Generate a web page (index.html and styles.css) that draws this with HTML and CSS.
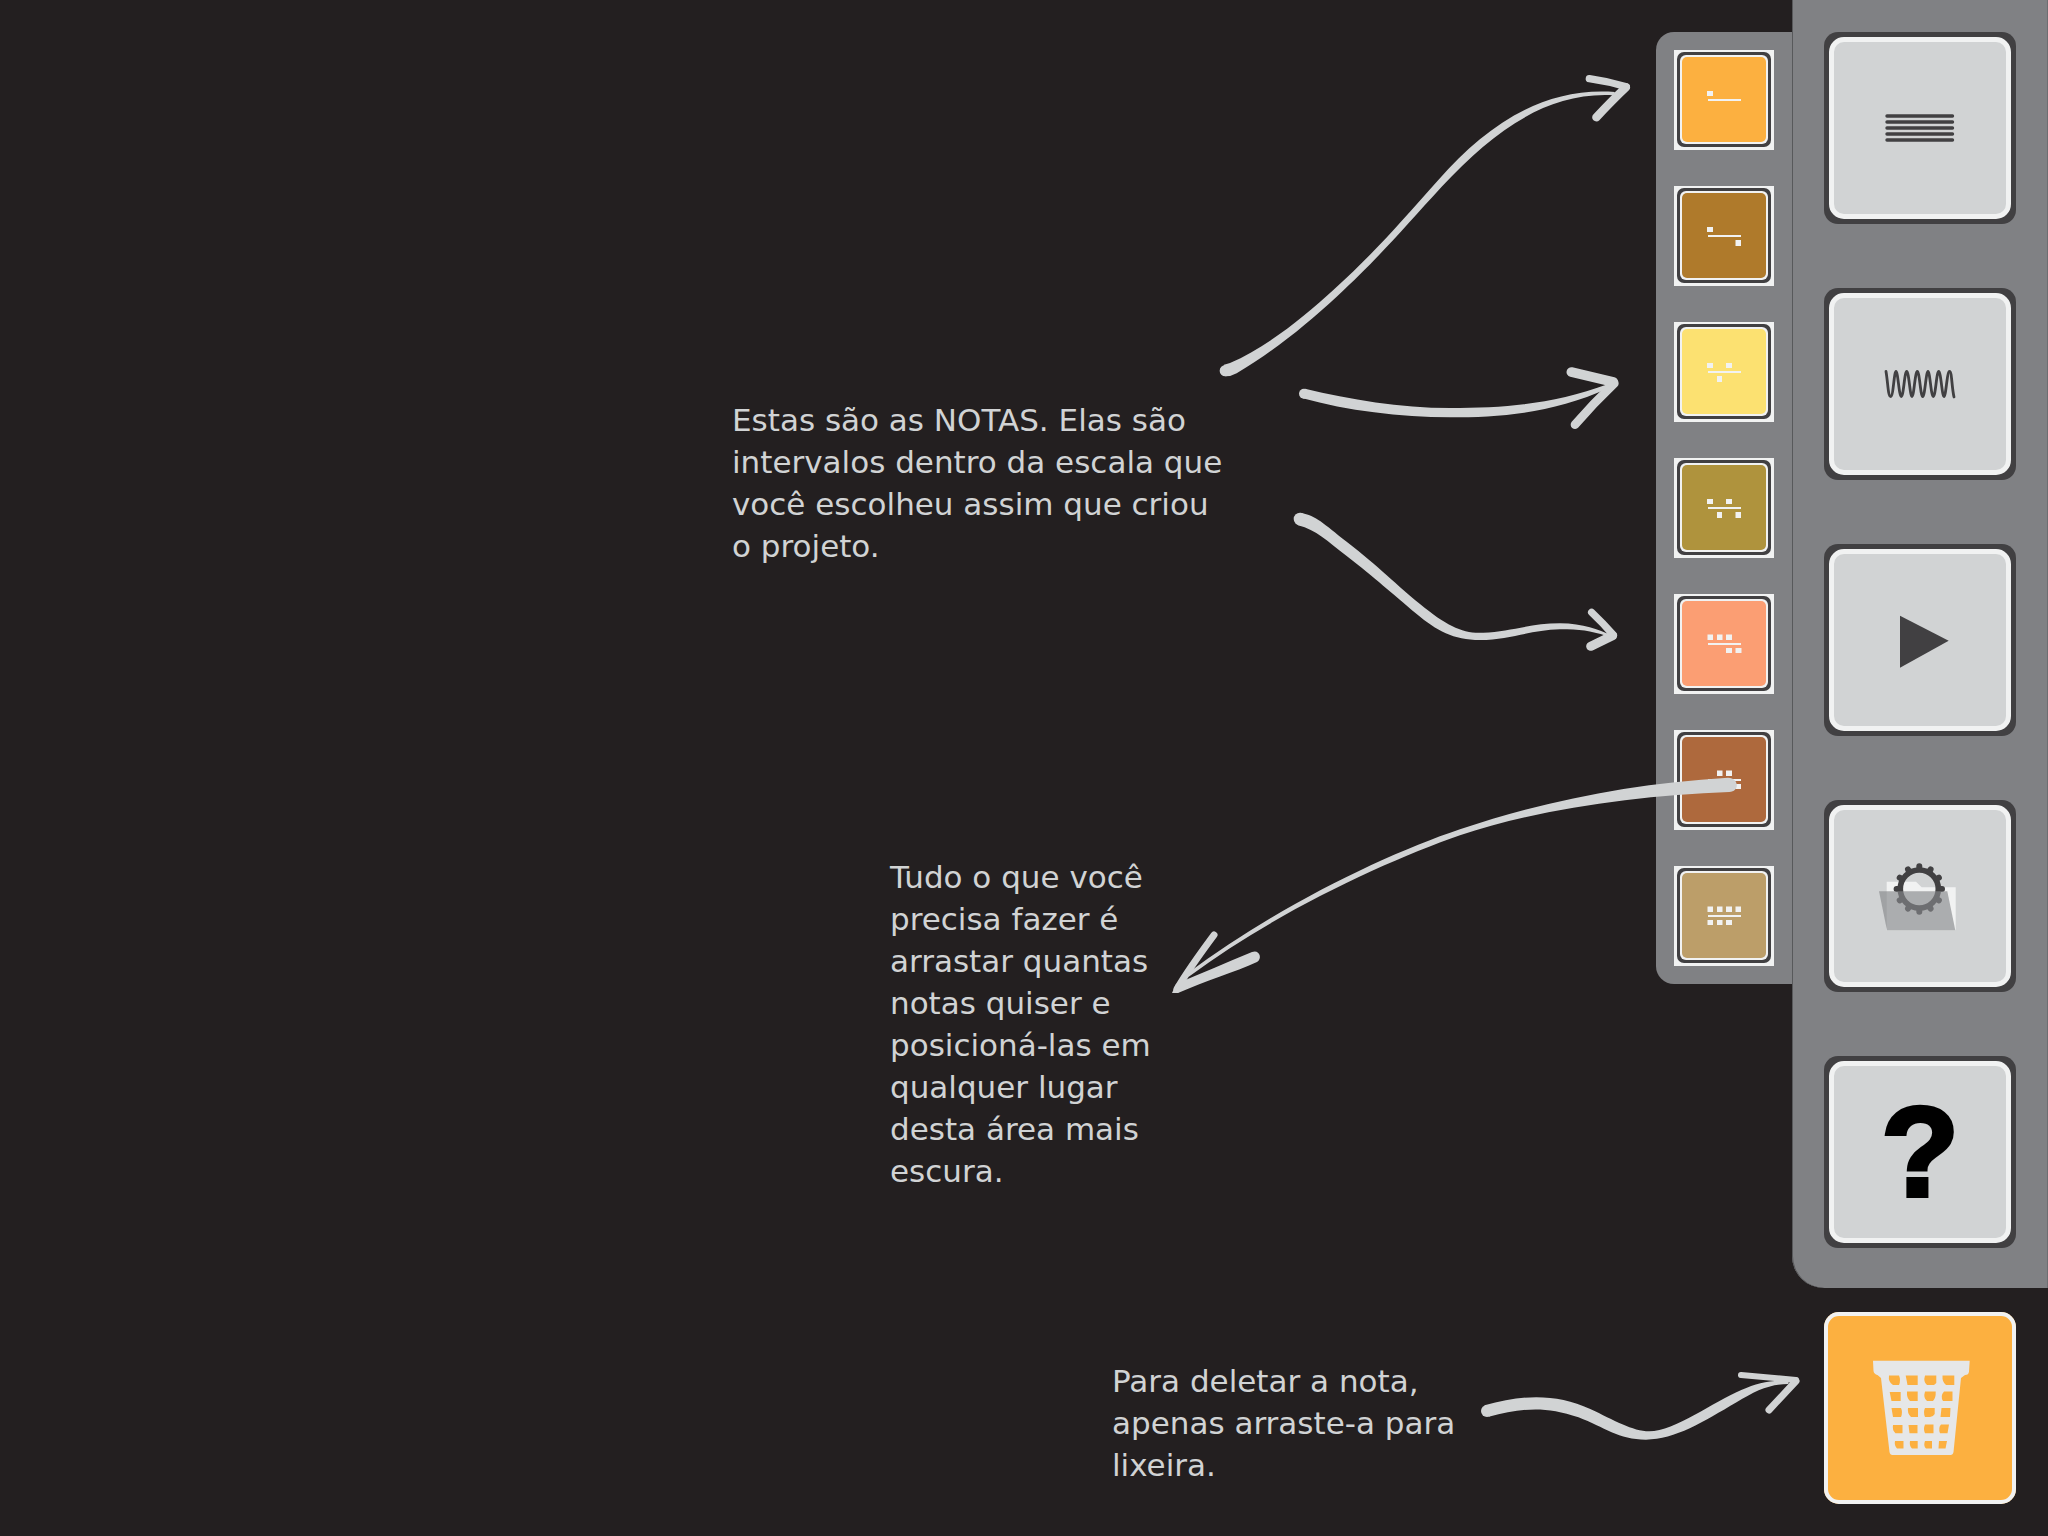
FILE: index.html
```html
<!DOCTYPE html>
<html lang="pt-BR">
<head>
<meta charset="utf-8">
<meta name="viewport" content="width=device-width, initial-scale=1">
<title>Notas</title>
<link rel="stylesheet" href="styles.css">
</head>
<body>
<svg class="defs" aria-hidden="true">
  <symbol id="note-frame" viewBox="0 0 100 100">
    <rect x="3" y="2" width="94" height="95" rx="7" fill="#414042"/>
    <rect x="6" y="5" width="88" height="89" rx="6" fill="#f1f2f2"/>
    <rect x="8" y="7" width="84" height="85" rx="5" fill="currentColor"/>
    <rect x="34" y="49" width="33" height="2" fill="#f1f2f2"/>
  </symbol>
</svg>
<div class="app">
  <main class="stage">
    <p class="callout callout-notes">Estas são as NOTAS. Elas são<br>intervalos dentro da escala que<br>você escolheu assim que criou<br>o projeto.</p>
    <p class="callout callout-drag">Tudo o que você<br>precisa fazer é<br>arrastar quantas<br>notas quiser e<br>posicioná-las em<br>qualquer lugar<br>desta área mais<br>escura.</p>
    <p class="callout callout-trash">Para deletar a nota,<br>apenas arraste-a para<br>lixeira.</p>
  </main>

  <nav class="notes" aria-label="Notas">
    <button class="note note-1" type="button" aria-label="Nota 1"><svg viewBox="0 0 100 100"><use href="#note-frame"/><path class="dots" d="M33 41h6v5h-6z"/></svg></button>
    <button class="note note-2" type="button" aria-label="Nota 2"><svg viewBox="0 0 100 100"><use href="#note-frame"/><path class="dots" d="M33 41h6v5h-6zM61.500 54h5.500v6h-5.500z"/></svg></button>
    <button class="note note-3" type="button" aria-label="Nota 3"><svg viewBox="0 0 100 100"><use href="#note-frame"/><path class="dots" d="M33 41h6v5h-6zM52 41h6v5h-6zM43 54h5v6h-5z"/></svg></button>
    <button class="note note-4" type="button" aria-label="Nota 4"><svg viewBox="0 0 100 100"><use href="#note-frame"/><path class="dots" d="M33 41h6v5h-6zM52 41h6v5h-6zM43 54h5v6h-5zM61.500 54h5.500v6h-5.500z"/></svg></button>
    <button class="note note-5" type="button" aria-label="Nota 5"><svg viewBox="0 0 100 100"><use href="#note-frame"/><path class="dots" d="M33.500 40.500h5.500v5.500h-5.500zM43 40.500h5.500v5.500h-5.500zM52 40.500h6v5.500h-6zM52 54h6v5h-6zM61.500 54h6v5h-6z"/></svg></button>
    <button class="note note-6" type="button" aria-label="Nota 6"><svg viewBox="0 0 100 100"><use href="#note-frame"/><path class="dots" d="M43 40.500h5.500v5.500h-5.500zM52 40.500h6v5.500h-6zM61.500 54h5.500v5h-5.500z"/></svg></button>
    <button class="note note-7" type="button" aria-label="Nota 7"><svg viewBox="0 0 100 100"><use href="#note-frame"/><path class="dots" d="M33.500 40.500h5.500v5.500h-5.500zM43 40.500h5.500v5.500h-5.500zM52 40.500h6v5.500h-6zM61.500 40.500h5.500v5.500h-5.500zM33.500 54h5.500v5h-5.500zM43 54h5.500v5h-5.500zM52 54h6v5h-6z"/></svg></button>
  </nav>

  <aside class="side">
    <div class="tools">
      <button class="tool" type="button" aria-label="Pauta"><span class="face"><svg viewBox="10 10 172 172"><path d="M63 84h65.500M63 90h65.500M63 96h65.500M63 102h65.500M63 108h65.500" stroke="#414042" stroke-width="3.400" stroke-linecap="round"/></svg></span></button>
      <button class="tool" type="button" aria-label="Onda"><span class="face"><svg viewBox="10 10 172 172"><path d="M62 83.500C64 95 64 108.500 66.700 108.500S70 83.500 72 83.500S75 108.500 77.300 108.500S80.500 83.500 82.700 83.500S86 108.500 88 108.500S91 83.500 93.300 83.500S96.500 108.500 98.700 108.500S102 83.500 104 83.500S107 108.500 109.300 108.500S112.500 83.500 114.700 83.500S118 108.500 120 108.500S123 83.500 125.500 83.500S127.500 98 130 109" fill="none" stroke="#414042" stroke-width="2.800" stroke-linecap="round"/></svg></span></button>
      <button class="tool" type="button" aria-label="Tocar"><span class="face"><svg viewBox="10 10 172 172"><path d="M76 71.700V123.700L124.700 96.700z" fill="#414042"/></svg></span></button>
      <button class="tool" type="button" aria-label="Projeto"><span class="face"><svg viewBox="10 10 172 172">
        <path d="M62.700 81.700H92L97.700 87.300H131.700V130.300H62.700z" fill="#f1f2f2"/>
        <g fill="none" stroke="#414042">
          <circle cx="95.300" cy="89" r="19" stroke-width="5.600"/>
          <path stroke-width="6" stroke-linecap="round" d="M95.300 69V66.300M95.300 109V111.700M75.300 89H72.600M115.300 89H118M105.300 71.700L106.600 69.400M112.600 79L114.900 77.700M112.600 99L114.900 100.300M105.300 106.300L106.600 108.600M85.300 106.300L84 108.600M78 99L75.700 100.300M78 79L75.700 77.700M85.300 71.700L84 69.400"/>
        </g>
        <path d="M55 91.300H123.300L131.300 130.300H63z" fill="#86878a" fill-opacity=".65"/>
      </svg></span></button>
      <button class="tool" type="button" aria-label="Ajuda"><span class="face help">?</span></button>
    </div>
    <button class="trash" type="button" aria-label="Lixeira"><svg viewBox="0 0 192 192">
      <path fill="#e6e7e8" fill-rule="evenodd" d="M49 48.700H145.700L145 59.500Q144.700 63 141 63L137 66L129.500 140Q129 143 126.500 143H68.500Q66 143 65.500 140L57 66L53.500 63Q50 62 49.500 59z
      M65 63.500H75Q77 68 75 73H69Q64 70 65 63.500zM81.700 63.500H93.700V73H83.500zM101 63.500H112.300V71L110 73H103Q99 70 101 63.500zM118.500 63.500H130.300V73H122Q118 70 118.500 63.500z
      M65.700 80H76.700V89H67.500zM83 79.500H93.700V89H86Q82.500 86 83 79.500zM101 79.500H111.700Q112 86 109 89H103Q99 86 101 79.500zM120 79.500H128.500V89H119Q116 84 120 79.500z
      M67.500 96H77Q79 100 77 105H69zM84 96H94V105H87Q83 101 84 96zM101 96H110.700V102Q109 105 106 105H101Q99 100 101 96zM117.500 96H126.500L126 105H116.500z
      M69 113H78.500V121.300H71.500Q68 118 69 113zM84.500 113H93.500V121.300H85.500zM101 112.500H109.500V121.300H101Q99 117 101 112.500zM117 112.500H125L123.500 121.300H116Q114 116 117 112.500z
      M71 129H79.500V136.500H73Q70 133 71 129zM86 129H93.700V136.500H88Q85 134 86 129zM101 129H108V136.500H102Q99 134 101 129zM115 129H123L121.500 136.500H114.500z"/>
    </svg></button>
  </aside>

  <svg class="arrows" viewBox="0 0 2048 1536" aria-hidden="true">
    <g transform="translate(1200 60) scale(.33333)">
      <circle cx="76" cy="932" r="17"/>
      <path d="M72 914L90 909C200 862 315 768 400 690C530 572 600 488 715 360C860 195 1030 80 1245 96L1240 106C1040 95 880 215 725 380C610 505 540 590 410 710C320 792 230 868 110 940Q95 949 76 949z"/>
      <path class="stroke" stroke-width="22" d="M1168 56Q1225 64 1279 80"/>
      <path class="stroke" stroke-width="25" d="M1278 82Q1238 120 1189 172"/>
      <circle cx="312" cy="1001" r="15"/>
      <path d="M315 986C450 1018 600 1044 750 1044C920 1044 1060 1032 1225 972V985C1060 1060 900 1072 750 1072C600 1072 440 1052 308 1015z"/>
      <path class="stroke" stroke-width="29" d="M1114 936Q1180 952 1240 966"/>
      <path class="stroke" stroke-width="26" d="M1243 970Q1180 1030 1125 1094"/>
    </g>
    <g transform="translate(1270 480) scale(.33333)">
      <circle cx="90" cy="117" r="19"/>
      <path d="M92 98C140 108 160 130 230 185C330 262 380 315 450 372C530 438 580 462 640 458C720 455 780 430 870 430C940 430 990 452 1015 462L1010 468C960 452 930 448 870 448C780 450 720 480 630 480C550 480 500 452 440 402C360 335 320 298 230 228C170 183 140 150 84 136z"/>
      <path class="stroke" stroke-width="22" d="M965 397Q1000 430 1030 465"/>
      <path class="stroke" stroke-width="27" d="M1028 467L962 499"/>
    </g>
    <path transform="translate(1150 760) scale(.3954 .33333)" d="M1462 53C1220 70 1000 122 784 208C600 281 320 440 95 640L98 650C320 455 600 302 784 226C980 148 1230 106 1465 96C1492 96 1490 53 1462 53z"/>
    <path class="stroke" stroke-width="7" d="M1214 935Q1188 970 1177 989"/>
    <path d="M1252 952C1225 963 1200 974 1176 984L1172 993L1178 993C1205 981 1235 972 1257 962C1263 958 1259 949 1252 952z"/>
    <path transform="translate(1090 1340) scale(.47193 .33333)" d="M836 196C920 162 990 162 1060 207C1110 240 1150 274 1185 274C1240 274 1320 185 1380 150C1415 128 1440 122 1480 120V132C1440 132 1410 152 1370 187C1300 245 1240 299 1178 299C1120 299 1090 262 1035 232C960 195 910 207 845 230z"/>
    <circle cx="1487" cy="1411" r="6"/>
    <path class="stroke" stroke-width="6" d="M1741 1375L1796 1380"/>
    <path class="stroke" stroke-width="7" d="M1796 1381L1769 1410"/>
  </svg>
</div>
</body>
</html>
```
FILE: styles.css
```css
* {
  box-sizing: border-box;
}

body {
  margin: 0;
  background: #231f20;
  color: #d1d3d4;
  font-family: "DejaVu Sans", sans-serif;
}

button {
  display: block;
  margin: 0;
  border: 0;
  padding: 0;
  font: inherit;
  cursor: pointer;
}

svg {
  display: block;
}

.defs {
  position: absolute;
  width: 0;
  height: 0;
}

.app {
  position: relative;
  display: flex;
  align-items: flex-start;
  min-height: 100vh;
  overflow: hidden;
}

/* Work area with the tutorial texts */
.stage {
  flex: 1;
  min-width: 0;
  display: flex;
  flex-direction: column;
  align-items: flex-end;
  padding-top: 399px;
}

.callout {
  margin: 0;
  font-size: 31px;
  line-height: 42px;
  white-space: nowrap;
}

.callout-notes {
  width: 924px;
  margin-bottom: 289px;
}

.callout-drag {
  width: 766px;
  margin-bottom: 168px;
}

.callout-trash {
  width: 544px;
}

/* Note palette */
.notes {
  display: flex;
  flex-direction: column;
  gap: 36px;
  margin-top: 32px;
  padding: 18px;
  border-radius: 18px 0 0 18px;
  background: #808184;
}

.note {
  width: 100px;
  height: 100px;
  background: #f1f2f2;
}

.dots {
  fill: #f1f2f2;
}

.note-1 { color: #fcb040; }
.note-2 { color: #af7a2b; }
.note-3 { color: #fce171; }
.note-4 { color: #af933d; }
.note-5 { color: #fb9e73; }
.note-6 { color: #ae693d; }
.note-7 { color: #bc9e69; }

/* Main tools */
.side {
  width: 256px;
}

.tools {
  display: flex;
  flex-direction: column;
  align-items: center;
  gap: 64px;
  padding: 32px 0 40px;
  border-radius: 0 0 0 32px;
  background: #808184;
  box-shadow: inset 1px 0 #58595b, inset -1px 0 #6d6e71;
}

.tool {
  width: 192px;
  height: 192px;
  padding: 5px;
  border-radius: 14px;
  background: #414042;
}

.face {
  display: flex;
  align-items: center;
  justify-content: center;
  height: 100%;
  border: 5px solid #f1f2f2;
  border-radius: 15px;
  background: #d1d3d4;
}

.face svg {
  width: 100%;
  height: 100%;
}

.help {
  color: #000;
  font-family: "Liberation Sans", sans-serif;
  font-size: 128px;
  font-weight: 700;
  line-height: 1;
  -webkit-text-stroke: 4px #000;
}

.trash {
  width: 192px;
  height: 192px;
  margin: 24px auto 32px;
  border-radius: 15px;
  background: #fcb040;
  box-shadow: inset 0 0 0 4px #f1f2f2;
}

.arrows {
  position: absolute;
  top: 0;
  right: 0;
  width: 2048px;
  height: 1536px;
  fill: #d1d3d4;
  pointer-events: none;
}

.stroke {
  fill: none;
  stroke: #d1d3d4;
  stroke-linecap: round;
}
```
